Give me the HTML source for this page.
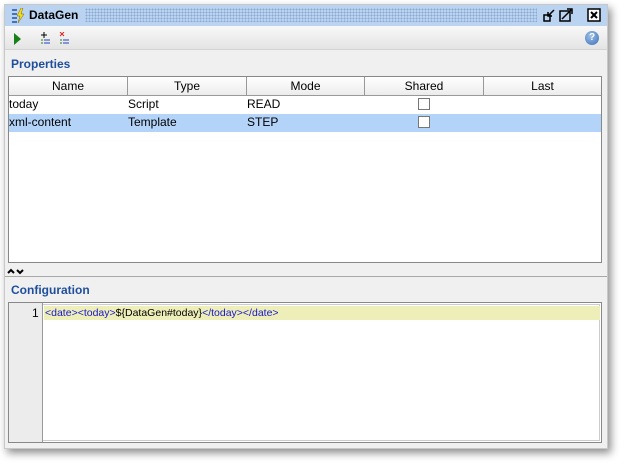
<!DOCTYPE html>
<html><head><style>
*{margin:0;padding:0;box-sizing:border-box}
body{width:624px;height:465px;background:#fff;font-family:"Liberation Sans",sans-serif;font-size:12px;position:relative;overflow:hidden}
.win{position:absolute;left:4px;top:4px;width:604px;height:445px;background:#f0f0f0;border:1px solid #c8c8c8;box-shadow:3px 4px 8px rgba(0,0,0,.45)}
.title{position:absolute;left:0;top:0;width:602px;height:21px;background:#b9d3f0}
.dots{position:absolute;left:80px;top:3px;width:452px;height:14px;background-image:radial-gradient(#8aa9cf 0.8px,transparent 1px);background-size:3px 3px}
.tb{position:absolute;left:0;top:21px;width:602px;height:24px;background:linear-gradient(#f8f8f8,#e4e4e4);border-bottom:1px solid #d4d4d4}
.lbl{position:absolute;color:#1f4e9c;font-weight:bold;font-size:12px}
.tbl{position:absolute;left:3px;top:71px;width:594px;height:187px;background:#fff;border:1px solid #888}
.hd{position:absolute;top:0;height:19px;border-right:1px solid #999;border-bottom:1px solid #999;background:linear-gradient(#fff,#ececec);text-align:center;line-height:18px}
.c{position:absolute;line-height:17px}
.cb{position:absolute;width:12px;height:12px;border:1px solid #777;background:#fff}
.ed{position:absolute;left:3px;top:297px;width:594px;height:141px;background:#fff;border:1px solid #888;outline:1px solid #ccc;outline-offset:-3px}
</style></head><body>
<div class="win">
 <div class="title">
  <svg style="position:absolute;left:6px;top:3px" width="14" height="15"><path d="M1 2h5M1 6h5M1 10h5M1 14h5" stroke="#2050b0" stroke-width="1.5"/><path d="M10 0L6 8h3l-2 7 6-9h-3l2-6z" fill="#f0e020" stroke="#806000" stroke-width=".5"/></svg>
  <div style="position:absolute;left:24px;top:3px;font-weight:bold;font-size:12px">DataGen</div>
  <div class="dots"></div>
  <svg style="position:absolute;left:538px;top:3px" width="64" height="15"><rect x="1" y="7" width="6" height="6" fill="none" stroke="#000" stroke-width="1.5"/><path d="M5 8L11 2M5 4v4h4" stroke="#000" stroke-width="1.5" fill="none"/><rect x="17" y="3" width="10" height="10" fill="none" stroke="#000" stroke-width="1.5"/><path d="M19 11L28 2M24 1h5v5" stroke="#000" stroke-width="1.5" fill="none"/><rect x="45" y="1" width="12" height="12" fill="#fff" stroke="#000" stroke-width="1.5"/><path d="M48 4l6 6M54 4l-6 6" stroke="#000" stroke-width="2"/></svg>
 </div>
 <div class="tb">
  <svg style="position:absolute;left:8px;top:6px" width="60" height="14"><path d="M1 1l7 6-7 6z" fill="#188018"/><path d="M28 3h6M31 0v6" stroke="#000"/><path d="M31 8h6M31 11h6" stroke="#2040c0"/><path d="M28 8h2M28 11h2" stroke="#208020"/><path d="M47 0l4 4M51 0l-4 4" stroke="#e02020"/><path d="M50 8h6M50 11h6" stroke="#2040c0"/><path d="M47 8h2M47 11h2" stroke="#208020"/></svg>
  <div style="position:absolute;left:580px;top:5px;width:14px;height:14px;border-radius:50%;background:radial-gradient(circle at 40% 35%,#9cc0ea,#3a6fb3);color:#fff;font-size:10px;font-weight:bold;text-align:center;line-height:14px">?</div>
 </div>
 <div class="lbl" style="left:6px;top:52px">Properties</div>
 <div class="tbl">
  <div class="hd" style="left:0;width:119px">Name</div>
  <div class="hd" style="left:119px;width:119px">Type</div>
  <div class="hd" style="left:238px;width:118px">Mode</div>
  <div class="hd" style="left:356px;width:119px">Shared</div>
  <div class="hd" style="left:475px;width:117px;border-right:none">Last</div>
  <div class="c" style="left:0;top:19px">today</div>
  <div class="c" style="left:119px;top:19px">Script</div>
  <div class="c" style="left:238px;top:19px">READ</div>
  <div class="cb" style="left:409px;top:21px"></div>
  <div style="position:absolute;left:0;top:37px;width:592px;height:18px;background:#b3d4f8"></div>
  <div class="c" style="left:0;top:37px">xml-content</div>
  <div class="c" style="left:119px;top:37px">Template</div>
  <div class="c" style="left:238px;top:37px">STEP</div>
  <div class="cb" style="left:409px;top:39px"></div>
 </div>
 <svg style="position:absolute;left:2px;top:262px" width="18" height="8"><path d="M1 6l3-3 3 3M10 3l3 3 3-3" stroke="#000" stroke-width="2" fill="none"/></svg>
 <div style="position:absolute;left:0;top:271px;width:602px;height:1px;background:#a8a8a8"></div>
 <div class="lbl" style="left:6px;top:278px">Configuration</div>
 <div class="ed">
  <div style="position:absolute;left:0;top:0;width:34px;height:139px;background:#ececec;border-right:1px solid #999"></div>
  <div style="position:absolute;left:23px;top:3px;font-size:12px">1</div>
  <div style="position:absolute;left:35px;top:3px;width:556px;height:14px;background:#eeeeb8"></div>
  <div style="position:absolute;left:36px;top:4px;font-size:10.5px;color:#1515d0">&lt;date&gt;&lt;today&gt;<span style="color:#000">${DataGen#today}</span>&lt;/today&gt;&lt;/date&gt;</div>
 </div>
</div>
</body></html>
